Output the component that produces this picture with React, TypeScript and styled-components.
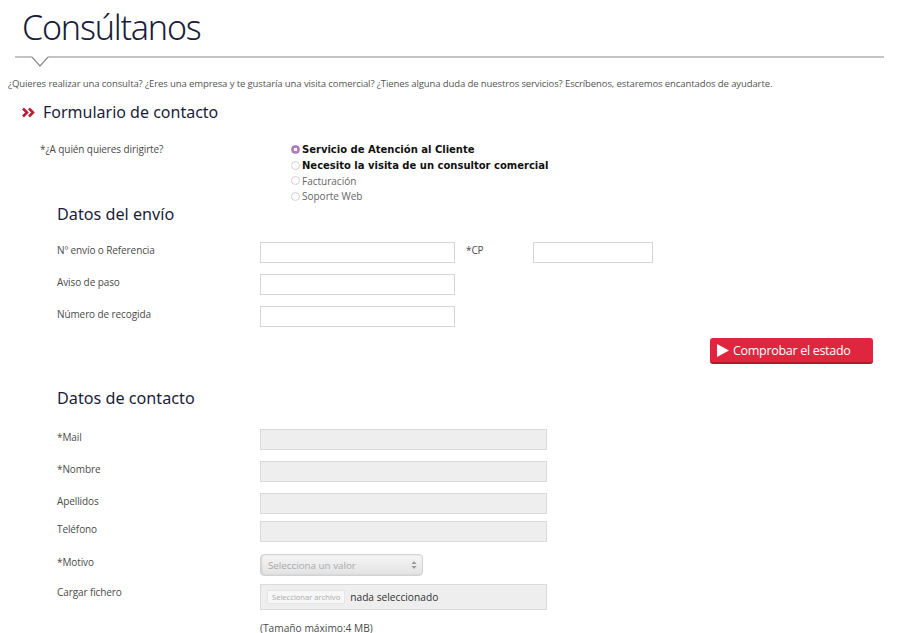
import React from "react";
import styled, {createGlobalStyle} from "styled-components";

const INK = "#1b1d3a";
const TEXT = "#4a4a4a";
const RED = "#e0253f";

const GlobalStyle = createGlobalStyle`
    html, body {
        margin: 0;
        padding: 0;
        background: #ffffff;
        font-family: "Open Sans", "Noto Sans", sans-serif;
        color: ${TEXT};
    }
`;

const Page = styled.div`
    width: 900px;
    padding: 0 0 40px 0;
    box-sizing: border-box;
`;

const Header = styled.div`
    padding: 0 16px 0 15px;
`;

const Title = styled.h1`
    margin: 0;
    padding: 4px 0 0 7px;
    font-family: "Noto Sans", sans-serif;
    font-weight: 300;
    font-size: 34px;
    line-height: 46px;
    letter-spacing: -1.2px;
    color: ${INK};
`;

const Rule = styled.div`
    position: relative;
    height: 12px;
    margin-top: 3px;
`;

const Intro = styled.p`
    margin: 12px 0 0 8px;
    font-size: 9.55px;
    letter-spacing: -0.12px;
    color: #555;
`;

const FormTitle = styled.h2`
    display: flex;
    align-items: center;
    gap: 8px;
    margin: 11px 0 0 22px;
    font-family: "Noto Sans", sans-serif;
    font-weight: 400;
    font-size: 16px;
    color: ${INK};
`;

const QuestionRow = styled.div`
    display: grid;
    grid-template-columns: 251px auto;
    margin: 18px 0 0 40px;
`;

const Label = styled.div`
    font-size: 10px;
    letter-spacing: -0.1px;
    color: ${TEXT};
    padding-top: 1px;
`;

const RadioList = styled.div`
    display: flex;
    flex-direction: column;
    gap: 2px;
    margin-top: 2px;
`;

const RadioOption = styled.label<{ $strong?: boolean }>`
    display: flex;
    align-items: center;
    height: 13.5px;
    font-family: ${p => (p.$strong ? `"DejaVu Sans", sans-serif` : `"Open Sans", sans-serif`)};
    font-weight: ${p => (p.$strong ? 700 : 400)};
    font-size: 10px;
    color: ${p => (p.$strong ? "#111" : "#666")};
`;

const RadioDot = styled.span<{ $checked?: boolean }>`
    width: 9px;
    height: 9px;
    margin-right: 2px;
    border-radius: 50%;
    box-sizing: border-box;
    border: 1px solid ${p => (p.$checked ? "#a46cb0" : "#d4d4d4")};
    background: ${p => (p.$checked ? "radial-gradient(circle, #fff 0 1.4px, #b77ec2 1.6px)" : "#fdfdfd")};
`;

const Section = styled.div`
    margin-left: 57px;
`;

const SectionTitle = styled.h3<{ $mt: number }>`
    margin: ${p => p.$mt}px 0 0 0;
    font-family: "Noto Sans", sans-serif;
    font-weight: 400;
    font-size: 16.2px;
    color: ${INK};
`;

const Row = styled.div<{ $mt: number }>`
    display: flex;
    align-items: flex-start;
    margin-top: ${p => p.$mt}px;
`;

const RowLabel = styled(Label)`
    width: 203px;
    flex: none;
`;

const TextBox = styled.div<{ $w: number; $filled?: boolean }>`
    width: ${p => p.$w}px;
    height: 21px;
    box-sizing: border-box;
    border: 1px solid ${p => (p.$filled ? "#dadada" : "#d6d6d6")};
    background: ${p => (p.$filled ? "#eeeeee" : "#ffffff")};
`;

const CpLabel = styled(Label)`
    width: 67px;
    margin-left: 11px;
`;

const ButtonRow = styled.div`
    display: flex;
    justify-content: flex-end;
    margin: 11px 27px 0 0;
`;

const CheckButton = styled.button`
    display: flex;
    align-items: center;
    gap: 4px;
    width: 163px;
    height: 26px;
    padding: 0 0 0 7px;
    border: none;
    border-radius: 3px;
    border-bottom: 2px solid #b4172d;
    background: ${RED};
    color: #fff;
    font-family: "Open Sans", sans-serif;
    font-size: 12.5px;
    letter-spacing: -0.3px;
    cursor: pointer;
`;

const SelectBox = styled.div`
    display: flex;
    align-items: center;
    justify-content: space-between;
    width: 163px;
    height: 22px;
    box-sizing: border-box;
    padding: 0 5px 0 7px;
    border: 1px solid #d2d2d2;
    border-radius: 4px;
    background: linear-gradient(#f6f6f6, #e2e2e2);
    box-shadow: inset 1px 0 2px rgba(0, 0, 0, 0.12);
    font-size: 9.8px;
    color: #aaa;
`;

const FileBox = styled.div`
    display: flex;
    align-items: center;
    gap: 5px;
    width: 287px;
    height: 26px;
    box-sizing: border-box;
    padding: 0 6px;
    border: 1px solid #dadada;
    background: #eeeeee;
    font-size: 10.2px;
    color: #333;
`;

const FileButton = styled.span`
    padding: 1px 4px;
    background: #f7f7f7;
    border: 1px solid #e6e6e6;
    font-size: 7.6px;
    color: #aaa;
`;

const Note = styled.div`
    margin: 11px 0 0 203px;
    font-size: 10.2px;
    color: ${TEXT};
`;

const HeaderRule = () => (
    <Rule>
        <svg width="869" height="14" viewBox="0 0 869 14">
            <path d="M0 1 H17 L25 10 L33 1 H869" fill="none" stroke="#8a8a8a" strokeWidth="1.2"/>
        </svg>
    </Rule>
);

const Chevrons = () => (
    <svg width="13" height="11" viewBox="0 0 13 11">
        <path d="M1 1.5 L5 5.5 L1 9.5 M7 1.5 L11 5.5 L7 9.5" fill="none" stroke="#c01e36" strokeWidth="2.6"/>
    </svg>
);

const PlayIcon = () => (
    <svg width="12" height="13" viewBox="0 0 12 13">
        <path d="M0 0 L12 6.5 L0 13 Z" fill="#fff"/>
    </svg>
);

const SelectArrows = () => (
    <svg width="6" height="10" viewBox="0 0 6 10">
        <path d="M0.5 4 L3 1 L5.5 4 Z M0.5 6 L3 9 L5.5 6 Z" fill="#9a9a9a"/>
    </svg>
);

const shipmentRows = [
    {label: "Nº envío o Referencia", mt: 17, cp: true},
    {label: "Aviso de paso", mt: 11},
    {label: "Número de recogida", mt: 11},
];

const contactRows = [
    {label: "*Mail", mt: 20},
    {label: "*Nombre", mt: 11},
    {label: "Apellidos", mt: 11},
    {label: "Teléfono", mt: 7},
];

const options = [
    {text: "Servicio de Atención al Cliente", strong: true, checked: true},
    {text: "Necesito la visita de un consultor comercial", strong: true},
    {text: "Facturación"},
    {text: "Soporte Web"},
];

export default function App() {
    return (
        <Page>
            <GlobalStyle/>
            <Header>
                <Title>Consúltanos</Title>
                <HeaderRule/>
            </Header>
            <Intro>
                ¿Quieres realizar una consulta? ¿Eres una empresa y te gustaría una visita comercial? ¿Tienes alguna duda de nuestros servicios? Escríbenos, estaremos encantados de ayudarte.
            </Intro>
            <FormTitle><Chevrons/>Formulario de contacto</FormTitle>
            <QuestionRow>
                <Label>*¿A quién quieres dirigirte?</Label>
                <RadioList>
                    {options.map(o => (
                        <RadioOption key={o.text} $strong={o.strong}>
                            <RadioDot $checked={o.checked}/>
                            {o.text}
                        </RadioOption>
                    ))}
                </RadioList>
            </QuestionRow>
            <Section>
                <SectionTitle $mt={0}>Datos del envío</SectionTitle>
                {shipmentRows.map(r => (
                    <Row key={r.label} $mt={r.mt}>
                        <RowLabel>{r.label}</RowLabel>
                        <TextBox $w={195}/>
                        {r.cp && (
                            <>
                                <CpLabel>*CP</CpLabel>
                                <TextBox $w={120}/>
                            </>
                        )}
                    </Row>
                ))}
            </Section>
            <ButtonRow>
                <CheckButton><PlayIcon/>Comprobar el estado</CheckButton>
            </ButtonRow>
            <Section>
                <SectionTitle $mt={23}>Datos de contacto</SectionTitle>
                {contactRows.map(r => (
                    <Row key={r.label} $mt={r.mt}>
                        <RowLabel>{r.label}</RowLabel>
                        <TextBox $w={287} $filled/>
                    </Row>
                ))}
                <Row $mt={12}>
                    <RowLabel>*Motivo</RowLabel>
                    <SelectBox>Selecciona un valor<SelectArrows/></SelectBox>
                </Row>
                <Row $mt={8}>
                    <RowLabel>Cargar fichero</RowLabel>
                    <FileBox><FileButton>Seleccionar archivo</FileButton>nada seleccionado</FileBox>
                </Row>
                <Note>(Tamaño máximo:4 MB)</Note>
            </Section>
        </Page>
    );
}
